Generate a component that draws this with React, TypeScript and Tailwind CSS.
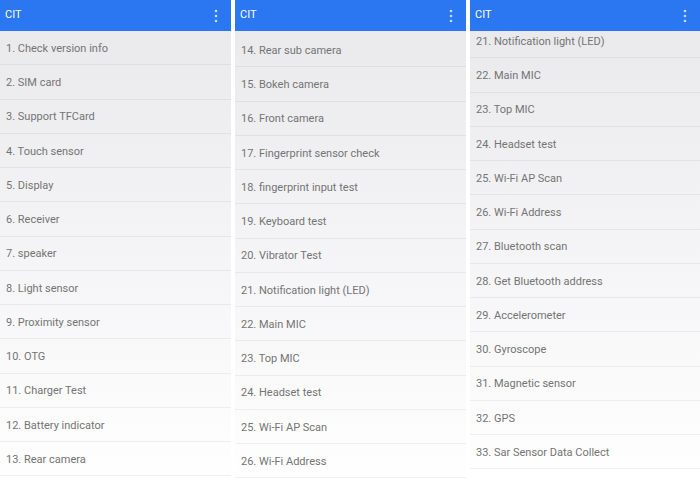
import React from 'react';

const panels = [
  {
    offset: 'mt-0',
    items: [
      '1. Check version info',
      '2. SIM card',
      '3. Support TFCard',
      '4. Touch sensor',
      '5. Display',
      '6. Receiver',
      '7. speaker',
      '8. Light sensor',
      '9. Proximity sensor',
      '10. OTG',
      '11. Charger Test',
      '12. Battery indicator',
      '13. Rear camera',
    ],
  },
  {
    offset: 'mt-[2px]',
    items: [
      '14. Rear sub camera',
      '15. Bokeh camera',
      '16. Front camera',
      '17. Fingerprint sensor check',
      '18. fingerprint input test',
      '19. Keyboard test',
      '20. Vibrator Test',
      '21. Notification light (LED)',
      '22. Main MIC',
      '23. Top MIC',
      '24. Headset test',
      '25. Wi-Fi AP Scan',
      '26. Wi-Fi Address',
    ],
  },
  {
    offset: '-mt-[7px]',
    items: [
      '21. Notification light (LED)',
      '22. Main MIC',
      '23. Top MIC',
      '24. Headset test',
      '25. Wi-Fi AP Scan',
      '26. Wi-Fi Address',
      '27. Bluetooth scan',
      '28. Get Bluetooth address',
      '29. Accelerometer',
      '30. Gyroscope',
      '31. Magnetic sensor',
      '32. GPS',
      '33. Sar Sensor Data Collect',
    ],
  },
];

const MoreIcon = () => (
  <svg width="4" height="14" viewBox="0 0 4 14" className="opacity-75">
    <circle cx="2" cy="2" r="1.3" fill="white" />
    <circle cx="2" cy="7" r="1.3" fill="white" />
    <circle cx="2" cy="12" r="1.3" fill="white" />
  </svg>
);

const Panel = ({ items, offset, width }: { items: string[]; offset: string; width: string }) => (
  <div className={`${width} h-full flex flex-col overflow-hidden`}>
    <div className="h-[31px] shrink-0 bg-[#2b77f1] flex items-center justify-between pl-[5px] pr-[13px] relative z-10">
      <span className="text-white text-[11px]">CIT</span>
      <MoreIcon />
    </div>
    <div className="flex-1 overflow-hidden bg-gradient-to-b from-[#eaeaec] via-[#f5f5f7] to-[#ffffff]">
      <div className={offset}>
        {items.map((item) => (
          <div
            key={item}
            className="h-[34.25px] flex items-center pl-[6px] pt-[3px] border-b border-[#0000000e] text-[11px] text-[#747474]"
          >
            {item}
          </div>
        ))}
      </div>
    </div>
  </div>
);

export default function App() {
  return (
    <div className="w-[700px] h-[492px] bg-white flex gap-[4px] overflow-hidden" style={{ fontFamily: 'Roboto, "Noto Sans", sans-serif' }}>
      <Panel items={panels[0].items} offset={panels[0].offset} width="w-[231px]" />
      <Panel items={panels[1].items} offset={panels[1].offset} width="w-[231px]" />
      <Panel items={panels[2].items} offset={panels[2].offset} width="w-[230px]" />
    </div>
  );
}
